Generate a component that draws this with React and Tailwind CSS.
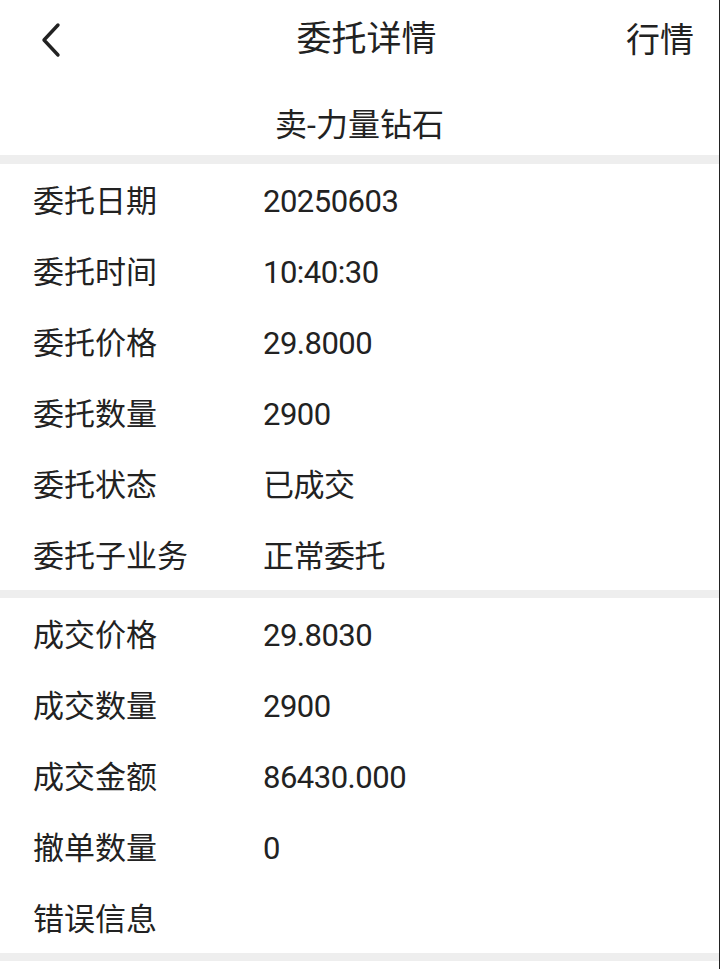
import React from 'react';

const font = { fontFamily: 'Roboto, "Noto Sans CJK SC", sans-serif' };

const orderRows = [
  ['委托日期', '20250603'],
  ['委托时间', '10:40:30'],
  ['委托价格', '29.8000'],
  ['委托数量', '2900'],
  ['委托状态', '已成交'],
  ['委托子业务', '正常委托'],
];

const dealRows = [
  ['成交价格', '29.8030'],
  ['成交数量', '2900'],
  ['成交金额', '86430.000'],
  ['撤单数量', '0'],
  ['错误信息', ''],
];

const Row = ({ label, value }) => (
  <div className="flex items-center h-[71px] pl-[33px] pt-[6px]">
    <span className="w-[230px] text-[31px] text-[#222]">{label}</span>
    <span className="text-[31px] text-[#222] tracking-[-0.5px]">{value}</span>
  </div>
);

const App = () => (
  <div className="w-[720px] h-[969px] bg-white border-r border-[#222] overflow-hidden" style={font}>
    <div className="flex items-center h-[80px] px-[25px]">
      <div className="flex-1 flex items-center">
        <svg width="26" height="36" viewBox="0 0 26 36" fill="none" className="ml-[14px]">
          <path d="M19 3 L5 18 L19 33" stroke="#222" strokeWidth="3.4" strokeLinecap="round" strokeLinejoin="round" />
        </svg>
      </div>
      <h1 className="text-[35px] text-[#222] ml-[14px]">委托详情</h1>
      <div className="flex-1 text-right text-[34px] text-[#222]">行情</div>
    </div>
    <div className="flex items-center justify-center h-[75px] pt-[14px] text-[32px] text-[#222]">卖-力量钻石</div>
    <div className="h-[9px] bg-[#eeeeee]" />
    <div>
      {orderRows.map(([l, v]) => <Row key={l} label={l} value={v} />)}
    </div>
    <div className="h-[8px] bg-[#eeeeee]" />
    <div>
      {dealRows.map(([l, v]) => <Row key={l} label={l} value={v} />)}
    </div>
    <div className="h-[8px] bg-[#eeeeee]" />
  </div>
);

export default App;
